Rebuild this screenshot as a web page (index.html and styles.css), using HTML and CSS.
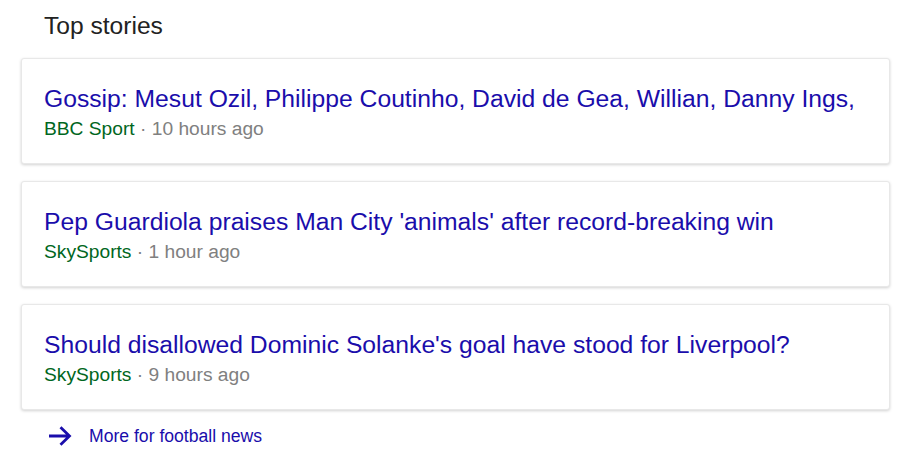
FILE: index.html
```html
<!DOCTYPE html>
<html>
<head>
<meta charset="utf-8">
<link rel="stylesheet" href="styles.css">
</head>
<body>
<div class="wrap">
  <h2 class="heading">Top stories</h2>
  <div class="cards">
    <a class="card" href="#">
      <div class="title">Gossip: Mesut Ozil, Philippe Coutinho, David de Gea, Willian, Danny Ings,</div>
      <div class="meta"><span class="src">BBC Sport</span> · 10 hours ago</div>
    </a>
    <a class="card" href="#">
      <div class="title">Pep Guardiola praises Man City 'animals' after record-breaking win</div>
      <div class="meta"><span class="src">SkySports</span> · 1 hour ago</div>
    </a>
    <a class="card" href="#">
      <div class="title">Should disallowed Dominic Solanke's goal have stood for Liverpool?</div>
      <div class="meta"><span class="src">SkySports</span> · 9 hours ago</div>
    </a>
  </div>
  <a class="more" href="#">
    <svg class="arrow" viewBox="0 0 24 20" width="24" height="20"><path d="M1 10H21.5M12.5 1.2L21.5 10L12.5 18.8" fill="none" stroke="#1a0dab" stroke-width="2.8"/></svg>
    <span>More for football news</span>
  </a>
</div>
</body>
</html>
```
FILE: styles.css
```css
html, body {
  margin: 0;
  padding: 0;
  background: #fff;
}
body {
  font-family: "Liberation Sans", Arial, sans-serif;
}
.wrap {
  width: 869px;
  margin-left: 21px;
  padding-top: 12px;
}
.heading {
  margin: 0 0 18px 23px;
  font-size: 24.6px;
  line-height: 28px;
  font-weight: normal;
  color: #222;
}
.cards {
  display: flex;
  flex-direction: column;
  gap: 17px;
}
.card {
  display: block;
  text-decoration: none;
  background: #fff;
  border: 1px solid #e8e8e8;
  border-radius: 3px;
  box-shadow: 0 1px 3px rgba(0,0,0,0.18);
  padding: 26px 22px 23px 22px;
  height: 55px;
}
.title {
  font-size: 24.7px;
  line-height: 28px;
  color: #1a0dab;
  white-space: nowrap;
  overflow: hidden;
}
.meta {
  margin-top: 4px;
  font-size: 19.2px;
  line-height: 23px;
  color: #808080;
}
.src {
  color: #006621;
}
.more {
  display: flex;
  align-items: center;
  gap: 17px;
  margin: 13px 0 0 27px;
  text-decoration: none;
  color: #1a0dab;
  font-size: 17.6px;
  line-height: 26px;
}
.arrow {
  display: block;
}
```
